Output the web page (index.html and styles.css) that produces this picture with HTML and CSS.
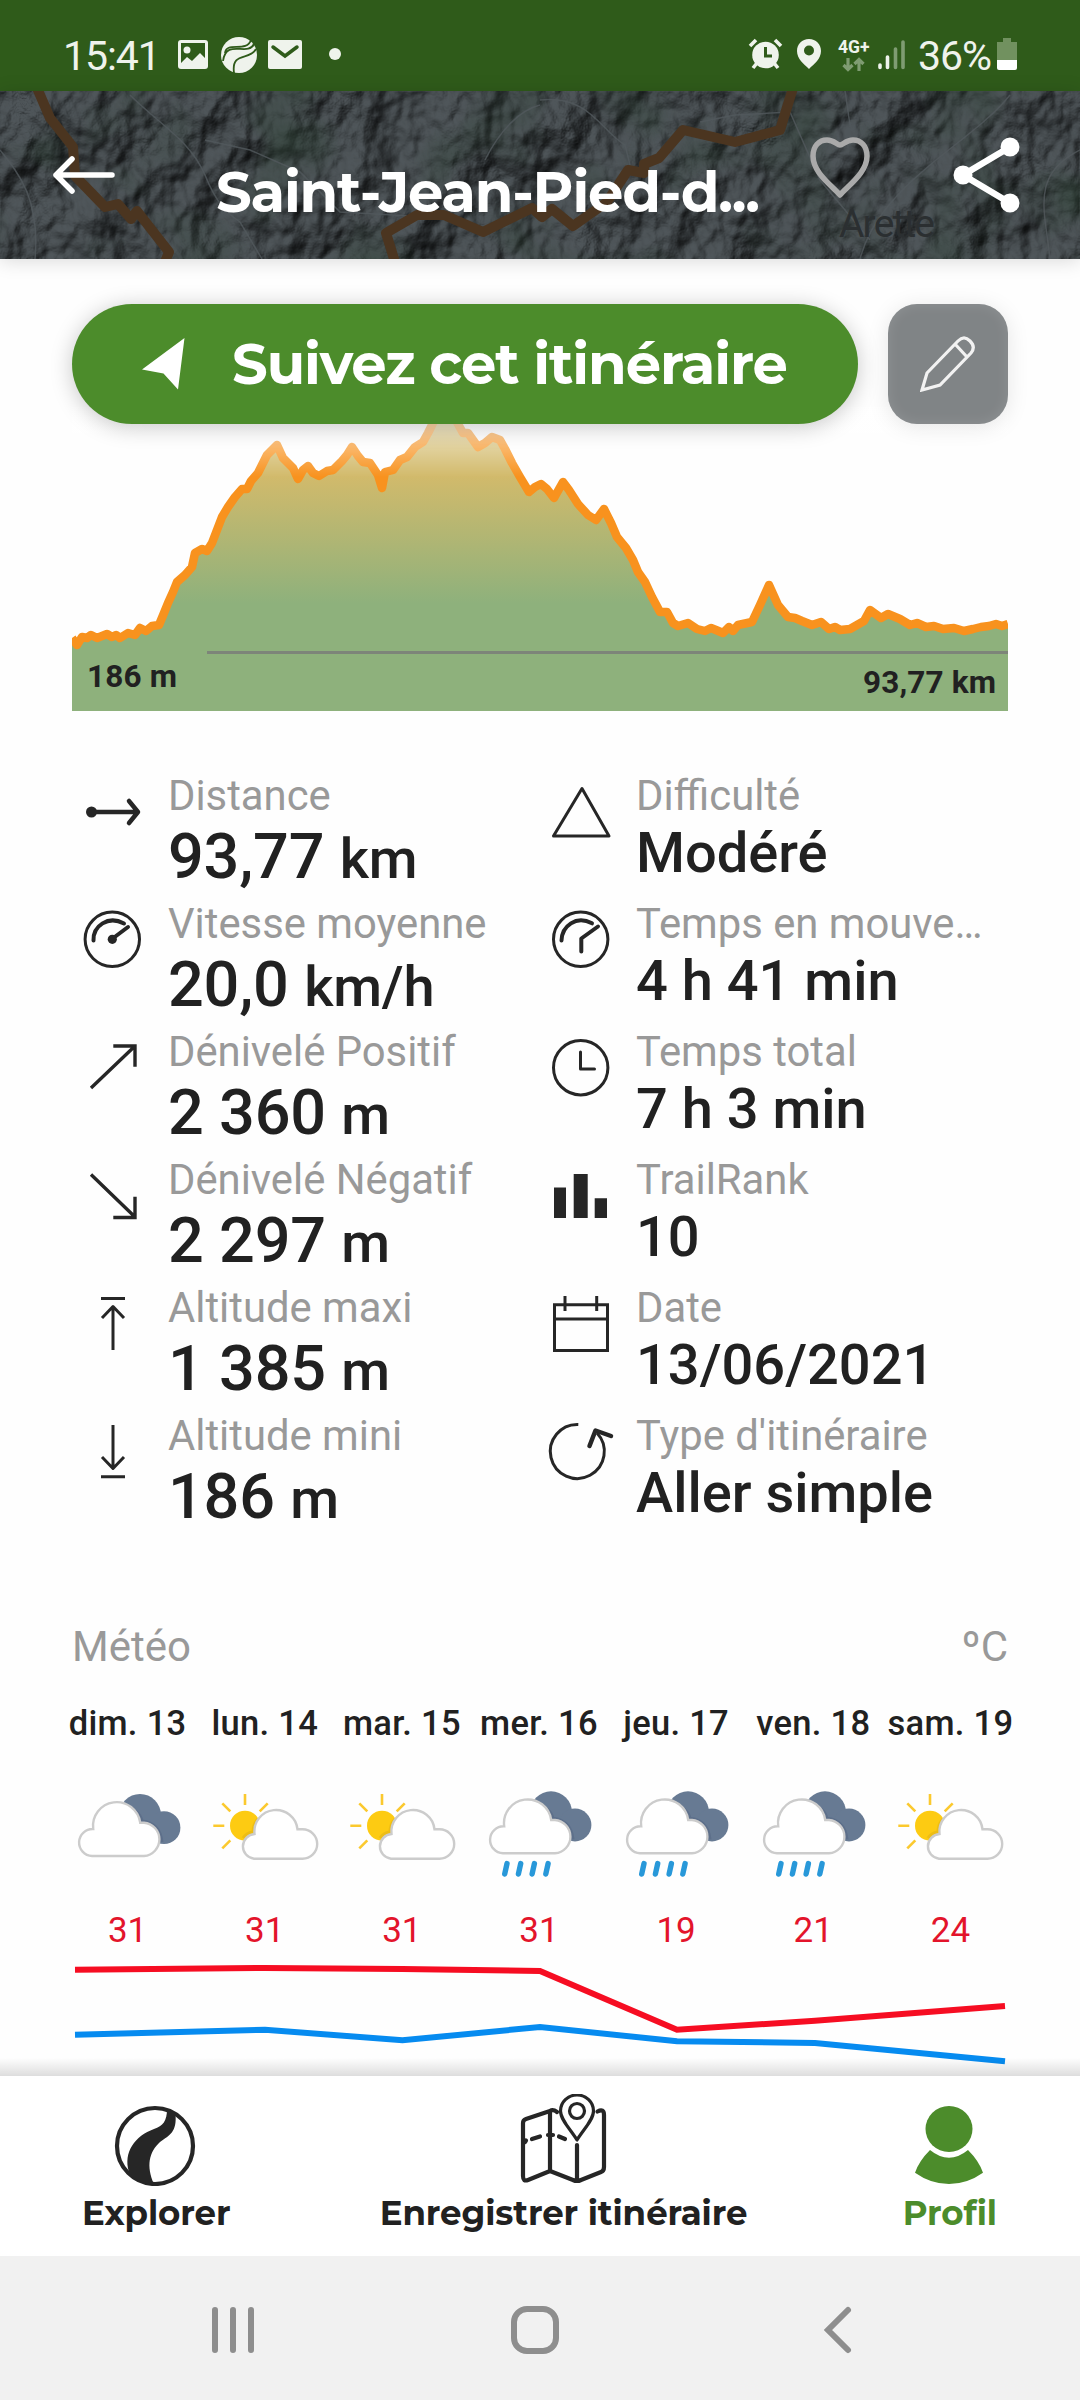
FILE: index.html
```html
<!DOCTYPE html>
<html lang="fr">
<head>
    <meta charset="UTF-8">
    <meta name="viewport" content="width=device-width, initial-scale=1.0">
    <title>Saint-Jean-Pied-de-Port</title>
    <link rel="stylesheet" href="styles.css">
</head>
<body>
    <!-- Weather icons -->
    <svg class="defs" width="0" height="0">
        <symbol id="clouds" viewBox="0 0 108 108">
            <circle cx="66" cy="35" r="21" fill="#677a93"/>
            <circle cx="90" cy="47.7" r="16.4" fill="#677a93"/>
            <path d="M50 25Q66 31 68 41Q86 43 88 62" fill="none" stroke="#5d6f8a" stroke-width="3"/>
            <path d="M18 76A13.5 13.5 0 0 1 19.2 49A23.5 23.5 0 0 1 66.2 42.7H70A16.7 16.7 0 0 1 70 76Z" fill="#fff" stroke="#ccc" stroke-width="2.4"/>
        </symbol>
        <symbol id="cloudy" viewBox="0 0 108 108">
            <use href="#clouds" width="108" height="108"/>
        </symbol>
        <symbol id="rain" viewBox="0 0 108 108">
            <use href="#clouds" y="-2.7" width="108" height="108"/>
            <path d="M22 83.6L19.7 94M35.7 83.6L33.4 94M49.4 83.6L47.1 94M63.1 83.6L60.8 94" stroke="#2898d9" stroke-width="5.4" stroke-linecap="round"/>
        </symbol>
        <symbol id="sunny" viewBox="0 0 108 108">
            <circle cx="34" cy="45.7" r="15" fill="#fdcb12"/>
            <path d="M34 14V25M2.3 45.7H13.3M11.3 23.3L19.3 31.3M56.7 23.3L48.7 31.3M11.3 68.3L19.3 60.3" stroke="#fbc92e" stroke-width="2.6"/>
            <path d="M47 39Q42 44 42 52Q35 53 32 58" fill="none" stroke="#edbd15" stroke-width="3"/>
            <path d="M43 78.7A12.4 12.4 0 0 1 43.5 54A21.4 21.4 0 0 1 86.5 49.3H91.5A14.7 14.7 0 0 1 91.5 78.7Z" fill="#fff" stroke="#ccc" stroke-width="2.4"/>
        </symbol>
    </svg>

    <div class="status-bar">
        <span class="clock">15:41</span>
        <svg class="status-left" width="166" height="40" viewBox="176 35 166 40">
            <rect x="178" y="40" width="30" height="29" rx="3" fill="#eff3ec"/>
            <path d="M181 43H205V58L200 53L192 61L187 57L181 63Z" fill="#2f5b1a"/>
            <circle cx="187" cy="50" r="3.5" fill="#eff3ec"/>
            <circle cx="239" cy="55" r="18" fill="#eff3ec"/>
            <path d="M225 53C226 41 247 53 251 40M223 61C226 38 248 57 254 44M234 73C231 51 250 61 256 49" fill="none" stroke="#2f5b1a" stroke-width="1.8"/>
            <rect x="268" y="40" width="34" height="29" rx="2" fill="#eff3ec"/>
            <path d="M273 47L285 56L297 47" fill="none" stroke="#2f5b1a" stroke-width="3.5" stroke-linecap="round"/>
            <circle cx="335" cy="54" r="6" fill="#eff3ec"/>
        </svg>
        <svg class="status-right" width="74" height="34" viewBox="748 37 74 34">
            <circle cx="765.5" cy="55" r="13.3" fill="#eff3ec"/>
            <path d="M757 63L753 68M774 63L778 68M750 46L756 40M775 40L781 46" stroke="#eff3ec" stroke-width="3.6"/>
            <path d="M765.5 47V56H772" fill="none" stroke="#2f5b1a" stroke-width="3"/>
            <path d="M809 39C802 39 797 44 797 51C797 59 804 64 809 69C814 64 821 59 821 51C821 44 816 39 809 39Z" fill="#eff3ec"/>
            <circle cx="809" cy="50.5" r="5" fill="#2f5b1a"/>
        </svg>
        <div class="network">
            <span>4G+</span>
            <svg width="24" height="15" viewBox="0 0 24 15">
                <path d="M6 1V12M1.5 8L6 12.5L10.5 8M17 14V3M12.5 7L17 2.5L21.5 7" fill="none" stroke="#7f9c72" stroke-width="3.2"/>
            </svg>
        </div>
        <svg class="signal" width="28" height="30" viewBox="0 0 28 30">
            <path d="M2 25V27.5M9.5 17V27.5" stroke="#eff3ec" stroke-width="3.6" stroke-linecap="round"/>
            <path d="M17.5 9V27.5M25 2V27.5" stroke="#7f9c72" stroke-width="3.6" stroke-linecap="round"/>
        </svg>
        <span class="percent">36%</span>
        <svg class="battery" width="20" height="32" viewBox="0 0 20 32">
            <path d="M6 0H14V4H20V22H0V4H6Z" fill="#71915f"/>
            <path d="M0 22H20V30Q20 32 18 32H2Q0 32 0 30Z" fill="#fff"/>
        </svg>
    </div>

    <header class="header">
        <!-- Relief map behind the title -->
        <svg class="map" width="1080" height="168" viewBox="0 91 1080 168">
            <filter id="relief" x="0" y="0" width="100%" height="100%" color-interpolation-filters="sRGB">
                <feTurbulence type="fractalNoise" baseFrequency="0.016 0.013" numOctaves="4" seed="11"/>
                <feColorMatrix type="matrix" values="0 0 0 0 0  0 0 0 0 0  0 0 0 0 0  1.2 0 0 0 0"/>
                <feGaussianBlur stdDeviation="0.7"/>
                <feDiffuseLighting surfaceScale="20" diffuseConstant="1" lighting-color="#535a5e">
                    <feDistantLight azimuth="225" elevation="55"/>
                </feDiffuseLighting>
            </filter>
            <filter id="woods" x="0" y="0" width="100%" height="100%" color-interpolation-filters="sRGB">
                <feTurbulence type="fractalNoise" baseFrequency="0.012" numOctaves="3" seed="4"/>
                <feColorMatrix type="matrix" values="0 0 0 0 0.18  0 0 0 0 0.26  0 0 0 0 0.21  2.6 0 0 0 -1.25"/>
            </filter>
            <rect y="91" width="1080" height="168" fill="#42484b"/>
            <rect y="91" width="1080" height="168" filter="url(#relief)" opacity="0.8"/>
            <rect y="91" width="1080" height="168" filter="url(#woods)" opacity="0.5"/>
            <!-- valleys and minor roads -->
            <g fill="none" stroke="#52595d" stroke-width="1.5" opacity="0.8">
                <path d="M130 95C160 125 190 140 205 175C215 200 225 212 240 222L262 259M205 140L250 150L300 172L340 212L410 216"/>
                <path d="M0 150C20 175 40 200 35 259M540 100C590 95 600 130 625 145L630 165"/>
                <path d="M860 259C870 220 900 190 930 165C960 140 990 120 1010 95M1080 150C1030 175 1045 210 1050 259"/>
                <path d="M700 122L735 115L790 112L820 180L870 240M845 91L850 125M485 160C500 130 520 110 540 105"/>
            </g>
            <g fill="none" stroke="#4b3520" stroke-width="10" stroke-linejoin="round">
                <path d="M37 88L50 118L73 147L75 176L105 207L118 204L131 219L137 211L169 252L165 262"/>
                <path d="M395 262L386 233L417 215H444L483 232L532 208L542 217L552 209L573 226L607 202L628 170L644 173V164L659 158L683 130L735 142L780 130L793 88"/>
            </g>
            <text x="839" y="237" class="town" textLength="96">Arette</text>
        </svg>
        <svg class="back" width="64" height="40" viewBox="0 0 64 40">
            <path d="M60 20H4M20 4L4 20L20 36" fill="none" stroke="#fff" stroke-width="5.5" stroke-linecap="round" stroke-linejoin="round"/>
        </svg>
        <h1>Saint-Jean-Pied-d...</h1>
        <svg class="heart" width="60" height="62" viewBox="0 0 60 62">
            <path d="M30 58C20 47 3 35 3 19C3 9 9 3 17 3C24 3 27 8 30 8C33 8 36 3 43 3C51 3 57 9 57 19C57 35 40 47 30 58Z" fill="none" stroke="#aaa" stroke-width="5.5" stroke-linejoin="round"/>
        </svg>
        <svg class="share" width="68" height="76" viewBox="0 0 68 76">
            <path d="M57 10L10 38L57 66" fill="none" stroke="#fff" stroke-width="6.5"/>
            <circle cx="57" cy="10" r="9.5" fill="#fff"/>
            <circle cx="10" cy="38" r="9.5" fill="#fff"/>
            <circle cx="57" cy="66" r="9.5" fill="#fff"/>
        </svg>
    </header>

    <main>
        <div class="actions">
            <button class="follow">
                <svg width="44" height="52" viewBox="0 0 44 52">
                    <path d="M0 31.5L42.5 0L36 51.5L21.5 35.5Z" fill="#fff"/>
                </svg>
                <span>Suivez cet itinéraire</span>
            </button>
            <button class="edit">
                <svg width="56" height="56" viewBox="0 0 56 56">
                    <path d="M2 54L7 37L38 5Q44 -1 50 5T51 17L20 49ZM35 8L47 21" fill="none" stroke="#f2f2f2" stroke-width="3.2"/>
                </svg>
            </button>
        </div>

        <svg class="profile" width="936" height="304" viewBox="0 0 936 304">
            <defs>
                <linearGradient id="ground" gradientUnits="userSpaceOnUse" x1="0" y1="68" x2="0" y2="196">
                    <stop offset="0" stop-color="#d2ba6b"/>
                    <stop offset="1" stop-color="#8eb17c"/>
                </linearGradient>
                <linearGradient id="fade" x1="0" y1="0" x2="0" y2="1">
                    <stop offset="0" stop-color="#fff" stop-opacity="0.8"/>
                    <stop offset="1" stop-color="#fff" stop-opacity="0"/>
                </linearGradient>
            </defs>
            <path d="M0 231L5 238L10 230L25 230L35 227L48 230L56 226L63 228L68 221L74 224L80 219L87 218L92 206L96 196L101 185L105 175L113 168L120 160L123 146L130 142L135 144L140 136L145 123L150 110L156 100L163 90L170 82H175L179 74L186 66L191 56L195 48L205 38L211 51L221 61L226 72L231 63L236 59L241 66L247 69L255 64L261 63L270 54L275 48L280 40L286 49L291 55L298 56L306 68L310 81L313 65L321 63L328 53L335 50L343 40L351 35L356 26L361 16L368 5H380L386 17L391 26H396L406 40L413 36L420 30L428 33L433 42L440 56L448 70L457 85L463 80L469 77L475 82L482 91L491 75L497 83L506 97L516 108L524 113L532 102L539 116L545 130L554 141L561 153L566 165L573 175L580 190L588 205H595L601 216L606 219L616 216L625 222L633 224L644 221L651 226L657 220L661 224L666 218L680 215L688 198L697 178L706 198L716 210L730 214L740 218L749 215L757 222L768 220L778 222L792 214L798 203L809 211L816 207L828 212L838 218L845 216L854 220L871 221L892 224L909 220L924 217L936 218V304H0Z" fill="url(#ground)"/>
            <path class="track" d="M0 231L5 238L10 230L15 231L19 228L25 231L30 229L35 227L40 230L44 228L48 231L56 226L63 228L68 221L74 224L80 219L87 218L92 206L96 196L101 185L105 175L113 168L120 160L123 146L130 142L135 144L140 136L145 123L150 110L156 100L163 90L170 82H175L179 74L186 66L191 56L195 48L205 38L211 51L221 61L226 72L231 63L236 59L241 66L247 69L255 64L261 63L270 54L275 48L280 40L286 49L291 55L298 56L306 68L310 81L313 65L321 63L328 53L335 50L343 40L351 35L356 26L361 16L368 5H380L386 17L391 26H396L406 40L413 36L420 30L428 33L433 42L440 56L448 70L457 85L463 80L469 77L475 82L482 91L491 75L497 83L506 97L516 108L524 113L532 102L539 116L545 130L554 141L561 153L566 165L573 175L580 190L588 205H595L601 216L606 219L616 216L625 222L633 224L639 221L644 223L651 226L657 220L661 224L666 218L680 215L688 198L697 178L706 198L716 210L723 211L730 214L740 218L749 215L757 222L763 220L768 223L778 222L792 214L798 203L809 211L816 207L828 212L838 218L845 216L854 220L862 219L871 222L882 221L892 224L901 222L909 220L917 219L924 217L930 219L936 217"/>
            <rect width="936" height="70" fill="url(#fade)"/>
            <path d="M135 245.5H936" stroke="#7d8579" stroke-width="3"/>
            <text x="15" y="280" textLength="90">186 m</text>
            <text x="791" y="286" textLength="133">93,77 km</text>
        </svg>

        <section class="stats">
            <div class="stat">
                <svg viewBox="0 0 60 60"><circle cx="9.5" cy="30" r="5.5" class="solid"/><path d="M9 30H55M47 19L56 30L47 41" stroke-width="4.5"/></svg>
                <div><h3>Distance</h3><p class="big">93,77 <small>km</small></p></div>
            </div>
            <div class="stat">
                <svg viewBox="0 0 60 60"><path d="M31 6.5L58 54H2.5Z" stroke-width="3"/></svg>
                <div><h3>Difficulté</h3><p>Modéré</p></div>
            </div>
            <div class="stat">
                <svg viewBox="0 0 60 60"><circle cx="30.3" cy="29.3" r="27.2" stroke-width="3"/><path d="M11.5 30.5C11 16 26 5 42 13.5M30 29L46 17" stroke-width="4"/><circle cx="30.3" cy="29.3" r="4.6" class="solid"/></svg>
                <div><h3>Vitesse moyenne</h3><p class="big">20,0 <small>km/h</small></p></div>
            </div>
            <div class="stat">
                <svg viewBox="0 0 60 60"><circle cx="29.7" cy="29.3" r="27.2" stroke-width="3"/><path d="M10.5 30.5C11 16 25 5 41 13.3M47 16.5L30.3 28.5V41.5" stroke-width="4"/></svg>
                <div><h3>Temps en mouve…</h3><p>4 h 41 min</p></div>
            </div>
            <div class="stat">
                <svg viewBox="0 0 60 60"><path d="M9 50L53 8M31.3 8H53V28.7" stroke-width="3.4" stroke-linejoin="miter" stroke-linecap="butt"/></svg>
                <div><h3>Dénivelé Positif</h3><p class="big">2 360 <small>m</small></p></div>
            </div>
            <div class="stat">
                <svg viewBox="0 0 60 60"><circle cx="29.7" cy="29.7" r="27.2" stroke-width="3"/><path d="M29.5 14V31H43.5" stroke-width="3"/></svg>
                <div><h3>Temps total</h3><p>7 h 3 min</p></div>
            </div>
            <div class="stat">
                <svg viewBox="0 0 60 60"><path d="M9 8.5L53 51M31.3 51.5H53V30.7" stroke-width="3.4" stroke-linejoin="miter" stroke-linecap="butt"/></svg>
                <div><h3>Dénivelé Négatif</h3><p class="big">2 297 <small>m</small></p></div>
            </div>
            <div class="stat">
                <svg viewBox="0 0 60 60"><path class="solid" d="M3 21.5H15V52H3ZM22.7 8H36.7V52H22.7ZM43.7 32.3H56V52H43.7Z"/></svg>
                <div><h3>TrailRank</h3><p>10</p></div>
            </div>
            <div class="stat">
                <svg viewBox="0 0 60 60"><path d="M19 4.5H43M31 12V56M20 24L31 12.5L42 24" stroke-width="3" stroke-linecap="butt"/></svg>
                <div><h3>Altitude maxi</h3><p class="big">1 385 <small>m</small></p></div>
            </div>
            <div class="stat">
                <svg viewBox="0 0 60 60"><path d="M3.5 10.7H56.5V56.5H3.5ZM3.5 25H56.5M14 2V17M45.7 2V17" stroke-width="3" stroke-linejoin="miter" stroke-linecap="butt"/></svg>
                <div><h3>Date</h3><p>13/06/2021</p></div>
            </div>
            <div class="stat">
                <svg viewBox="0 0 60 60"><path d="M31 3V47M20 35L31 46.5L42 35M19 54.7H43" stroke-width="3" stroke-linecap="butt"/></svg>
                <div><h3>Altitude mini</h3><p class="big">186 <small>m</small></p></div>
            </div>
            <div class="stat">
                <svg viewBox="0 0 60 60"><path d="M27.3 2.5A27 27 0 1 0 46 11" stroke-width="3" stroke-linecap="butt"/><path d="M38.5 24L44.5 8.5L60 14" stroke-width="4.5"/></svg>
                <div><h3>Type d'itinéraire</h3><p>Aller simple</p></div>
            </div>
        </section>

        <section class="weather">
            <div class="weather-title"><span>Météo</span><span>ºC</span></div>
            <div class="days">
                <div class="day"><h4>dim. 13</h4><svg><use href="#cloudy"/></svg><p>31</p></div>
                <div class="day"><h4>lun. 14</h4><svg><use href="#sunny"/></svg><p>31</p></div>
                <div class="day"><h4>mar. 15</h4><svg><use href="#sunny"/></svg><p>31</p></div>
                <div class="day"><h4>mer. 16</h4><svg><use href="#rain"/></svg><p>31</p></div>
                <div class="day"><h4>jeu. 17</h4><svg><use href="#rain"/></svg><p>19</p></div>
                <div class="day"><h4>ven. 18</h4><svg><use href="#rain"/></svg><p>21</p></div>
                <div class="day"><h4>sam. 19</h4><svg><use href="#sunny"/></svg><p>24</p></div>
            </div>
            <svg class="temps" width="936" height="115" viewBox="0 0 936 115" fill="none" stroke-width="6">
                <path d="M3 74.7L193 69.7L330.5 80.3L468 67L605 81.3L743 83L933 101.3" stroke="#068bf0"/>
                <path d="M3 9.7L193 8L330 9L468 11L605 69.7L743 60.7L933 46" stroke="#f60d22"/>
            </svg>
        </section>
    </main>

    <nav class="tabs">
        <a class="tab">
            <svg viewBox="0 0 92 92">
                <circle cx="45" cy="52" r="38" fill="none" stroke="#262626" stroke-width="4.2"/>
                <path d="M57 15C57 27 53 32 44 35C25 42 13 58 19 78C26 87 35 91 44 90C36 72 39 58 50 48C60 41 67 38 65.5 20Z" fill="#262626"/>
            </svg>
            <span>Explorer</span>
        </a>
        <a class="tab record">
            <svg viewBox="0 0 92 92" fill="none" stroke="#262626" stroke-width="4.2" stroke-linejoin="round" stroke-linecap="round">
                <path d="M32 17L8 25Q5 26 5 29V82Q5 88 10 86L32 77V17Q35 15 39 18"/>
                <path d="M32 77L55 86Q59 88 63 86L83 78Q86 77 86 73V21Q86 14 79.5 17.5M59 51V86"/>
                <path d="M7 48L8 46.5M14 45L22 42.5M30 41H35M41 42.5L47 45"/>
                <path d="M59 46C53 36 42.5 26 42.5 17A16.5 16 0 0 1 75.5 17C75.5 26 65 36 59 46Z" stroke-width="3.2"/>
                <circle cx="59" cy="17" r="7.5" stroke-width="3.2"/>
            </svg>
            <span>Enregistrer itinéraire</span>
        </a>
        <a class="tab active">
            <svg viewBox="0 0 92 92">
                <ellipse cx="45" cy="35" rx="23.5" ry="23"/>
                <path d="M26 56Q45 71.5 64 56Q75 67 79 78.7Q63 90 45 90T11 78.7Q15 67 26 56Z"/>
            </svg>
            <span>Profil</span>
        </a>
    </nav>

    <div class="system-nav">
        <svg width="48" height="50" viewBox="0 0 48 50"><path d="M6 5V45M24 5V45M42 5V45"/></svg>
        <svg width="48" height="50" viewBox="0 0 48 50"><rect x="3" y="4" width="42" height="42" rx="13"/></svg>
        <svg width="48" height="50" viewBox="0 0 48 50"><path d="M35 5L15 25L35 45"/></svg>
    </div>
</body>
</html>
```
FILE: styles.css
```css
* {
    margin: 0;
    padding: 0;
    box-sizing: border-box;
}

body {
    width: 1080px;
    height: 2400px;
    overflow: hidden;
    display: flex;
    flex-direction: column;
    background: #fefefe;
    color: #212121;
    font-family: Roboto, sans-serif;
}

svg {
    display: block;
    flex-shrink: 0;
}

.defs {
    position: absolute;
}

/* Status bar */
.status-bar {
    height: 91px;
    flex-shrink: 0;
    display: flex;
    align-items: flex-start;
    padding: 35px 63px 0 62px;
    background: #2f5b1a;
    color: #eff3ec;
}

.clock,
.percent {
    font-size: 41px;
    line-height: 42px;
    letter-spacing: -1.1px;
}

.clock {
    width: 114px;
    padding-left: 1px;
}

.status-right {
    margin: 2px 16px 0 auto;
}

.network {
    width: 32px;
    margin-top: 4px;
    font-size: 17.5px;
    font-weight: 700;
    line-height: 17px;
}

.network svg {
    margin: 1px 0 0 4px;
}

.signal {
    margin: 5px 0 0 8px;
}

.percent {
    width: 80px;
    padding-left: 12px;
    white-space: nowrap;
}

.battery {
    margin: 3px 0 0 11px;
}

/* Header over the map */
.header {
    position: relative;
    height: 168px;
    flex-shrink: 0;
    display: flex;
    align-items: flex-start;
    padding-left: 52px;
    color: #fff;
    box-shadow: 0 2px 18px rgba(0, 0, 0, 0.15);
}

.header > * {
    position: relative;
}

.header .map {
    position: absolute;
    top: 0;
    left: 0;
}

.town {
    font-size: 39px;
    fill: #2b2f31;
}

.back {
    margin-top: 64px;
}

.header h1 {
    width: 594px;
    margin: 63px 0 0 100px;
    font-family: "Montserrat", "Open Sans", sans-serif;
    font-size: 56px;
    font-weight: 700;
    line-height: 76px;
    letter-spacing: -1.2px;
    white-space: nowrap;
}

.heart {
    margin-top: 46px;
}

.share {
    margin: 46px 0 0 83px;
}

main {
    height: 1817px;
    flex-shrink: 0;
    padding: 45px 72px 0;
}

.actions {
    position: relative;
    display: flex;
    gap: 30px;
    margin-bottom: -17px;
}

.actions button {
    border: none;
    height: 120px;
    color: #fff;
}

.follow {
    display: flex;
    align-items: flex-start;
    width: 786px;
    padding: 34px 0 0 70px;
    border-radius: 60px;
    background: #4c8c2b;
    box-shadow: 0 3px 22px rgba(0, 0, 0, 0.22);
    font-family: "Montserrat", "Open Sans", sans-serif;
    font-size: 56px;
    font-weight: 700;
    line-height: 76px;
    letter-spacing: -1.1px;
    white-space: nowrap;
}

.follow span {
    margin: -12px 0 0 46px;
}

.edit {
    width: 120px;
    padding: 0 0 0 32px;
    border-radius: 29px;
    background: #808486;
    box-shadow: 0 3px 22px rgba(0, 0, 0, 0.1), inset 0 0 14px rgba(255, 255, 255, 0.12);
}

/* Elevation profile */
.profile text {
    font-size: 31.5px;
    font-weight: 700;
    fill: #212121;
}

.track {
    fill: none;
    stroke: #f8921e;
    stroke-width: 8.5;
    stroke-linejoin: round;
}

/* Stats */
.stats {
    display: grid;
    grid-template-columns: 468px 468px;
    grid-auto-rows: 128px;
    margin-top: 60px;
}

.stat {
    display: flex;
}

.stat svg {
    width: 60px;
    height: 60px;
    margin: 11px 26px 0 10px;
    overflow: visible;
    fill: none;
    stroke: #262626;
    stroke-linecap: round;
    stroke-linejoin: round;
}

.stat:nth-child(even) svg {
    margin: 11px 25px 0 11px;
}

.stat svg .solid {
    fill: #262626;
    stroke: none;
}

.stat h3 {
    font-size: 41.8px;
    font-weight: 400;
    line-height: 49px;
    color: #999;
    white-space: nowrap;
}

.stat p {
    margin-top: 1px;
    font-size: 56px;
    font-weight: 500;
    line-height: 64px;
    white-space: nowrap;
}

.stat .big {
    font-size: 63px;
    line-height: 72px;
    letter-spacing: -0.2px;
}

.stat small {
    font-size: 56px;
    line-height: 1;
}

/* Weather */
.weather-title {
    display: flex;
    justify-content: space-between;
    margin-top: 83px;
    font-size: 42px;
    line-height: 50px;
    color: #999;
}

.days {
    display: grid;
    grid-template-columns: repeat(7, 1fr);
    margin: 29px -11px 0 -13px;
}

.day {
    display: flex;
    flex-direction: column;
    align-items: center;
}

.day h4 {
    font-size: 34.5px;
    font-weight: 500;
    line-height: 44px;
    letter-spacing: 0.3px;
    white-space: nowrap;
}

.day svg {
    width: 108px;
    height: 108px;
    margin-top: 35px;
}

.day p {
    margin-top: 21px;
    font-size: 35px;
    line-height: 44px;
    color: #e3142b;
}

.temps {
    margin-top: 7px;
}

/* Tabs */
.tabs {
    position: relative;
    height: 180px;
    flex-shrink: 0;
    display: flex;
    justify-content: space-between;
    padding: 18px 83px 0 82px;
    background: #fff;
    font-family: "Montserrat", "Open Sans", sans-serif;
    font-size: 34px;
    font-weight: 700;
    letter-spacing: -0.1px;
}

.tabs::before {
    content: "";
    position: absolute;
    left: 0;
    right: 0;
    bottom: 100%;
    height: 18px;
    background: linear-gradient(rgba(0, 0, 0, 0), rgba(0, 0, 0, 0.13));
}

.tab {
    display: flex;
    flex-direction: column;
    align-items: center;
}

.record {
    margin-right: 6px;
}

.tab svg {
    width: 92px;
    height: 92px;
}

.tab span {
    line-height: 46px;
    margin-top: 4px;
    white-space: nowrap;
}

.active {
    color: #4c8c2b;
    fill: #4c8c2b;
}

.system-nav {
    height: 144px;
    flex-shrink: 0;
    display: grid;
    grid-template-columns: repeat(3, 302px);
    justify-items: center;
    padding: 49px 0 0 82px;
    background: #f1f1f1;
}

.system-nav svg {
    fill: none;
    stroke: #8e8e8e;
    stroke-width: 6;
    stroke-linecap: round;
}
```
